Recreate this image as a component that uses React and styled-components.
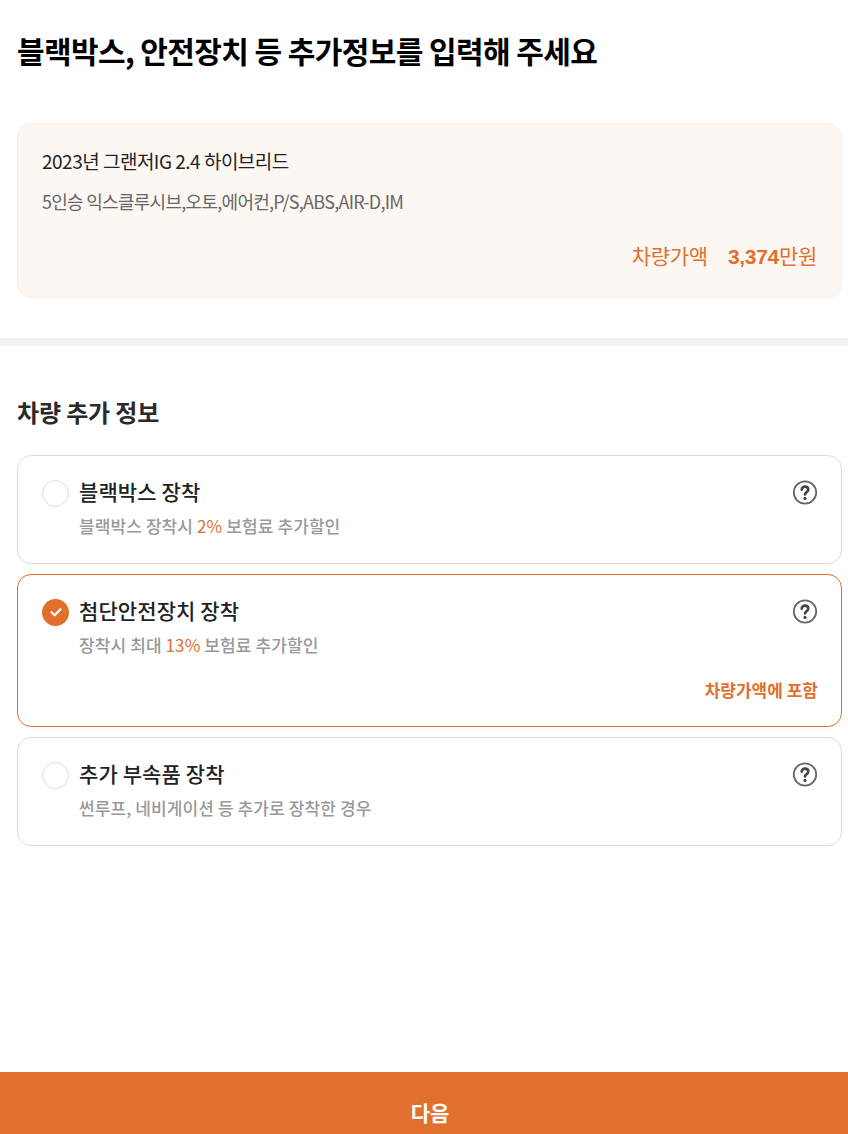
import React from 'react';
import styled, { createGlobalStyle } from 'styled-components';

const ORANGE = '#e1702e';

const GlobalStyle = createGlobalStyle`
  html, body { margin: 0; padding: 0; background: #fff; }
  body { font-family: "Noto Sans CJK KR", "Noto Sans", sans-serif; color: #222; }
  * { box-sizing: border-box; }
`;

const Page = styled.div`
  height: 1134px;
  overflow: hidden;
  display: flex;
  flex-direction: column;
`;

const Main = styled.main`
  flex: 1;
`;

const Header = styled.section`
  padding: 28px 6px 0 17px;
`;

const Title = styled.h1`
  margin: 0 0 51px;
  font-size: 30px;
  line-height: 44px;
  font-weight: 700;
  letter-spacing: -0.6px;
  color: #000;
`;

const CarCard = styled.div`
  height: 175px;
  padding: 23px 24px 0;
  background: #fdf7f3;
  border: 1px solid #f8efe9;
  border-radius: 14px;
`;

const CarName = styled.p`
  margin: 0;
  font-size: 19px;
  line-height: 28px;
  letter-spacing: -0.5px;
  color: #222;
`;

const CarSpec = styled.p`
  margin: 12px 0 0;
  font-size: 18px;
  line-height: 28px;
  letter-spacing: -0.72px;
  color: #666;
`;

const PriceRow = styled.div`
  display: flex;
  justify-content: flex-end;
  gap: 20px;
  margin-top: 25px;
  font-size: 21px;
  line-height: 30px;
  letter-spacing: -0.3px;
  color: ${ORANGE};
`;

const PriceValue = styled.span`
  b { font-family: "Liberation Sans", sans-serif; font-weight: 700; }
`;

const Divider = styled.div`
  height: 8px;
  margin-top: 40px;
  background: #f2f2f2;
`;

const Options = styled.section`
  padding: 49px 6px 0 17px;
`;

const SectionTitle = styled.h2`
  margin: 0 0 26px;
  font-size: 24px;
  line-height: 34px;
  font-weight: 700;
  letter-spacing: -0.15px;
  color: #2a2a2a;
`;

const OptionList = styled.div`
  display: flex;
  flex-direction: column;
  gap: 10.5px;
`;

const OptionCard = styled.div`
  padding: 21px 24px 23.5px;
  background: #fff;
  border: 1px solid ${p => (p.$checked ? ORANGE : '#dcdcdc')};
  border-radius: 14px;
`;

const OptionHead = styled.div`
  display: flex;
  align-items: center;
  gap: 10px;
`;

const Radio = styled.span`
  flex: none;
  width: 27px;
  height: 27px;
  border-radius: 50%;
  display: flex;
  align-items: center;
  justify-content: center;
  background: ${p => (p.$checked ? ORANGE : '#fff')};
  border: ${p => (p.$checked ? 'none' : '1px solid #dcdcdc')};
`;

const OptionName = styled.span`
  flex: 1;
  padding-bottom: 3px;
  font-size: 21px;
  line-height: 29px;
  letter-spacing: 0.1px;
  font-weight: 500;
  color: #222;
`;

const Desc = styled.p`
  margin: 4px 0 0 37px;
  font-size: 17px;
  line-height: 26px;
  letter-spacing: 0.1px;
  font-weight: 500;
  color: #999;

  em { font-style: normal; font-weight: 400; color: ${ORANGE}; }
`;

const Included = styled.p`
  margin: 20px -1px 0 0;
  text-align: right;
  font-size: 17px;
  line-height: 24px;
  font-weight: 700;
  color: ${ORANGE};
`;

const NextButton = styled.button`
  flex: none;
  height: 62px;
  padding: 17px 0 0 12px;
  border: 0;
  background: ${ORANGE};
  color: #fff;
  font-family: inherit;
  font-size: 21px;
  font-weight: 700;
  line-height: 30px;
`;

const HelpSvg = styled.svg`
  flex: none;
  margin-right: -1px;
`;

function CheckIcon() {
  return (
    <svg width="14" height="14" viewBox="0 0 14 14" fill="none">
      <path d="M2.5 7.3 5.6 10.2 11.5 4.2" stroke="#fff" strokeWidth="2.2" strokeLinecap="round" strokeLinejoin="round" />
    </svg>
  );
}

function HelpIcon() {
  return (
    <HelpSvg width="26" height="26" viewBox="0 0 26 26" fill="none">
      <circle cx="13" cy="12.5" r="11.2" stroke="#666" strokeWidth="1.8" />
      <path d="M9.7 9.8c0-2 1.4-3.2 3.3-3.2s3.3 1.2 3.3 3c0 2.6-3.3 2.6-3.3 4.9" stroke="#444" strokeWidth="2.6" strokeLinecap="round" />
      <circle cx="13" cy="18.4" r="1.6" fill="#444" />
    </HelpSvg>
  );
}

const options = [
  { name: '블랙박스 장착', desc: <>블랙박스 장착시 <em>2%</em> 보험료 추가할인</> },
  { name: '첨단안전장치 장착', desc: <>장착시 최대 <em>13%</em> 보험료 추가할인</>, checked: true, note: '차량가액에 포함' },
  { name: '추가 부속품 장착', desc: '썬루프, 네비게이션 등 추가로 장착한 경우' },
];

export default function App() {
  return (
    <Page>
      <GlobalStyle />
      <Main>
        <Header>
          <Title>블랙박스, 안전장치 등 추가정보를 입력해 주세요</Title>
          <CarCard>
            <CarName>2023년 그랜저IG 2.4 하이브리드</CarName>
            <CarSpec>5인승 익스클루시브,오토,에어컨,P/S,ABS,AIR-D,IM</CarSpec>
            <PriceRow>
              <span>차량가액</span>
              <PriceValue><b>3,374</b>만원</PriceValue>
            </PriceRow>
          </CarCard>
        </Header>
        <Divider />
        <Options>
          <SectionTitle>차량 추가 정보</SectionTitle>
          <OptionList>
            {options.map(o => (
              <OptionCard key={o.name} $checked={o.checked}>
                <OptionHead>
                  <Radio $checked={o.checked}>{o.checked && <CheckIcon />}</Radio>
                  <OptionName>{o.name}</OptionName>
                  <HelpIcon />
                </OptionHead>
                <Desc>{o.desc}</Desc>
                {o.note && <Included>{o.note}</Included>}
              </OptionCard>
            ))}
          </OptionList>
        </Options>
      </Main>
      <NextButton>다음</NextButton>
    </Page>
  );
}
